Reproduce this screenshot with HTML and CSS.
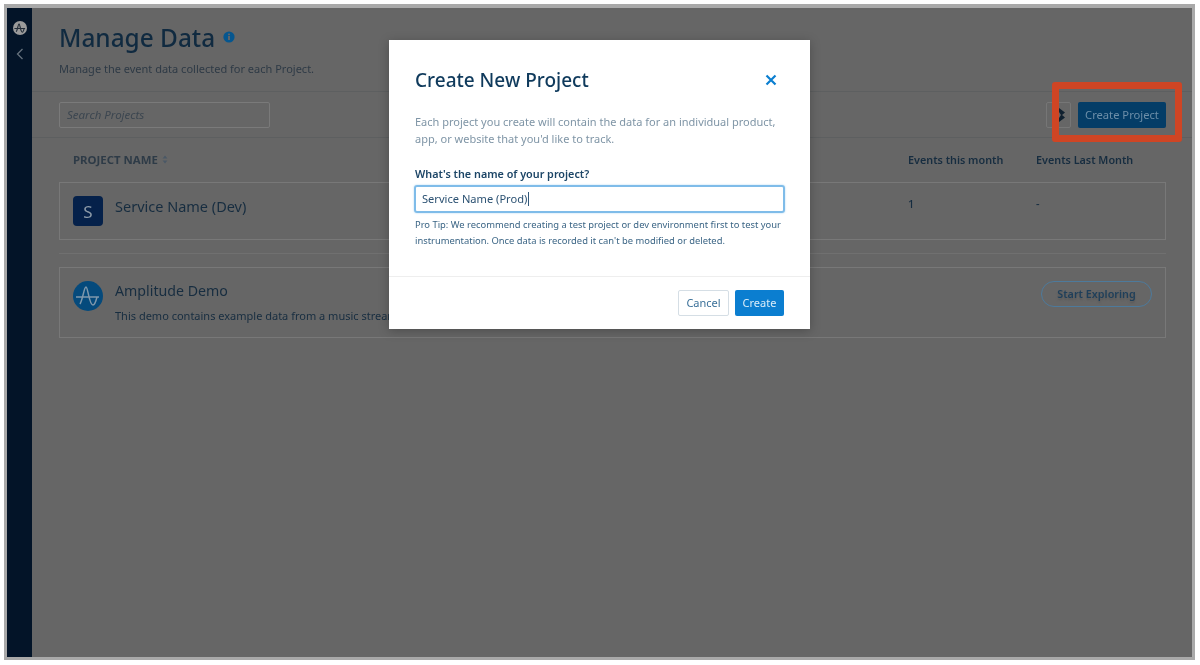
FILE: index.html
```html
<!DOCTYPE html>
<html lang="en">
<head>
<meta charset="utf-8">
<title>Manage Data</title>
<link rel="stylesheet" href="styles.css">
</head>
<body>
<div class="window">
  <aside class="sidebar">
    <svg class="side-logo" viewBox="0 0 30 30" width="14" height="14"><circle cx="15" cy="15" r="15" fill="#9a9a9a"/><path d="M3 16H26M7 23C10 18 11 6 13 6C15 6 16 24 20 24C22 24 23 20 24 16" fill="none" stroke="#222c38" stroke-width="2.400"/></svg>
    <svg class="side-back" viewBox="0 0 8 12" width="8" height="12"><path d="M6.500 1L1.500 6L6.500 11" fill="none" stroke="#66727d" stroke-width="1.300"/></svg>
  </aside>
  <main class="main">
    <header class="head">
      <h1 class="title">Manage Data <svg class="info" viewBox="0 0 12 12" width="12" height="12"><circle cx="6" cy="6" r="5.600" fill="#05568f"/><rect x="5.100" y="5" width="1.800" height="4" fill="#666"/><rect x="5.100" y="2.600" width="1.800" height="1.600" fill="#666"/></svg></h1>
      <p class="subtitle">Manage the event data collected for each Project.</p>
    </header>
    <div class="toolbar">
      <div class="search">Search Projects</div>
      <div class="tools">
        <div class="tool-icon"><svg viewBox="0 0 10 16" width="10" height="16"><path d="M2 1L8 5.500L5 8L8 10.500L2 15V11L4 8L2 5Z" fill="#10202f"/></svg></div>
        <div class="create-project">Create Project</div>
      </div>
    </div>
    <div class="content">
      <div class="cols">
        <div class="col-name">PROJECT NAME <svg viewBox="0 0 6 9" width="6" height="9"><path d="M3 .5L5.400 3.600H.6ZM3 8.500L.6 5.400H5.400Z" fill="#4a5866"/></svg></div>
        <div class="col-this">Events this month</div>
        <div class="col-last">Events Last Month</div>
      </div>
      <div class="row">
        <div class="avatar">S</div>
        <div class="row-name">Service Name (Dev)</div>
        <div class="val-this">1</div>
        <div class="val-last">-</div>
      </div>
      <hr class="sep">
      <div class="demo">
        <svg class="demo-logo" viewBox="0 0 30 30" width="30" height="30"><circle cx="15" cy="15" r="15" fill="#054a7c"/><path d="M3 16H26M7 23C10 18 11 6 13 6C15 6 16 24 20 24C22 24 23 20 24 16" fill="none" stroke="#7f98ac" stroke-width="1.500"/></svg>
        <div class="demo-body">
          <div class="demo-name">Amplitude Demo</div>
          <div class="demo-desc">This demo contains example data from a music streaming app to help you explore the many powerful analysis features in Amplitude.</div>
        </div>
        <div class="explore">Start Exploring</div>
      </div>
    </div>
  </main>
</div>
<div class="highlight"></div>
<section class="modal">
  <div class="modal-body">
    <div class="modal-head">
      <h2 class="modal-title">Create New Project</h2>
      <svg class="close" viewBox="0 0 12 12" width="12" height="12"><path d="M1.500 1.500L10.500 10.500M10.500 1.500L1.500 10.500" stroke="#0b7fd0" stroke-width="2.200" fill="none"/></svg>
    </div>
    <p class="intro">Each project you create will contain the data for an individual product, app, or website that you'd like to track.</p>
    <div class="label">What's the name of your project?</div>
    <div class="input"><span>Service Name (Prod)</span><i class="caret"></i></div>
    <p class="tip">Pro Tip: We recommend creating a test project or dev environment first to test your instrumentation. Once data is recorded it can't be modified or deleted.</p>
  </div>
  <div class="modal-foot">
    <div class="btn-cancel">Cancel</div>
    <div class="btn-create">Create</div>
  </div>
</section>
</body>
</html>
```
FILE: styles.css
```css
* { box-sizing: border-box; }
html, body { margin: 0; height: 100%; }
body {
  background: #fff;
  font-family: "Noto Sans", sans-serif;
  padding: 4px 5px 5px 4px;
  overflow: hidden;
}
.window {
  display: flex;
  width: 1191px;
  height: 656px;
  border: 3px solid #a9a9a9;
  border-top-width: 4px;
  background: #666;
  filter: blur(.3px);
}
.sidebar {
  width: 25px;
  flex: none;
  background: #031428;
  display: flex;
  flex-direction: column;
  align-items: center;
  padding-top: 13px;
  gap: 13px;
}
.main { flex: 1; min-width: 0; display: flex; flex-direction: column; }
.head { height: 84px; padding: 12px 0 0 27px; border-bottom: 1px solid #5d5f60; }
.title {
  margin: 0;
  font-size: 24.400px;
  line-height: 36px;
  font-weight: 500;
  color: #102a40;
  display: flex;
  align-items: center;
  gap: 8px;
}
.info { margin-top: -2px; }
.subtitle { margin: 5px 0 0; font-size: 11px; line-height: 16px; color: #2e3a46; }
.toolbar {
  height: 46px;
  padding: 10px 26px 0 27px;
  border-bottom: 1px solid #5d5f60;
  display: flex;
  justify-content: space-between;
}
.search {
  width: 211px;
  height: 26px;
  border: 1px solid #7a7a7a;
  border-radius: 2px;
  padding-left: 7px;
  font-size: 11.500px;
  line-height: 24px;
  font-style: italic;
  color: #3c4650;
}
.tools { display: flex; gap: 7px; }
.tool-icon {
  width: 25px;
  height: 26px;
  border: 1px solid #767676;
  border-radius: 2px;
  display: flex;
  align-items: center;
  justify-content: flex-end;
  padding-right: 3px;
}
.create-project {
  width: 88px;
  height: 26px;
  background: #043d67;
  border-radius: 2px;
  color: #6c8ea8;
  font-size: 11.200px;
  line-height: 26px;
  text-align: center;
}
.content { padding: 0 26px 0 27px; }
.cols {
  height: 44px;
  display: flex;
  align-items: center;
  padding: 0 0 2px 14px;
  font-size: 10.800px;
  font-weight: 600;
  color: #172d40;
}
.col-name { flex: 1; font-size: 11.400px; font-weight: 700; color: #2e3b47; display: flex; align-items: center; gap: 4px; }
.col-this { width: 128px; }
.col-last { width: 130px; }
.row {
  height: 58px;
  border: 1px solid #787878;
  display: flex;
  align-items: flex-start;
  padding: 13px 0 0 13px;
}
.avatar {
  width: 30px;
  height: 30px;
  border-radius: 4px;
  background: #05214a;
  color: #8c9aa8;
  font-size: 17px;
  line-height: 31px;
  text-align: center;
  flex: none;
}
.row-name { flex: 1; margin: 0 0 0 12px; font-size: 14.500px; line-height: 20px; color: #172d40; }
.val-this { width: 128px; font-size: 11px; line-height: 16px; color: #152c40; font-weight: 500; }
.val-last { width: 129px; font-size: 11px; line-height: 16px; color: #152c40; font-weight: 500; }
.sep { margin: 13px 0; border: 0; border-top: 1px solid #707070; }
.demo {
  height: 71px;
  border: 1px solid #787878;
  display: flex;
  align-items: flex-start;
  padding: 13px 13px 0;
  gap: 12px;
}
.demo-logo { flex: none; }
.demo-body { flex: 1; min-width: 0; }
.demo-name { font-size: 14.200px; line-height: 20px; color: #172d40; }
.demo-desc { font-size: 11px; line-height: 16px; color: #172d40; margin-top: 7px; white-space: nowrap; }
.explore {
  width: 111px;
  height: 26px;
  flex: none;
  border: 1px solid #4d7a9c;
  border-radius: 13px;
  text-align: center;
  font-size: 10.800px;
  line-height: 24px;
  font-weight: 600;
  color: #1f3f5a;
  text-shadow: 0 2px 2px #585858;
}
.highlight {
  position: absolute;
  left: 1052px;
  top: 82px;
  width: 130px;
  height: 60px;
  border: 7px solid #cf4524;
  border-radius: 3px;
}
.modal {
  position: absolute;
  left: 389px;
  top: 40px;
  width: 421px;
  height: 289px;
  background: #fff;
  box-shadow: 0 2px 10px rgba(0, 0, 0, .25);
  display: flex;
  flex-direction: column;
  filter: blur(.3px);
}
.modal-body { height: 237px; padding: 28px 26px 0; border-bottom: 1px solid #eee; }
.modal-head { display: flex; justify-content: space-between; align-items: center; height: 26px; padding: 0 7px 2px 0; }
.modal-title { margin: 0; font-size: 19px; line-height: 26px; font-weight: 500; color: #0f3a5c; }
.intro { margin: 19px 0 0; font-size: 11px; line-height: 17px; color: #7f95a6; }
.label { margin-top: 19px; font-size: 10.800px; line-height: 16px; font-weight: 600; color: #1c4566; }
.input {
  margin: 3px 0 0 -1px;
  width: 371px;
  height: 28px;
  border: 2px solid #7fbce9;
  border-radius: 3px;
  box-shadow: 0 0 2px #a9d3f1;
  padding-left: 6px;
  font-size: 11.100px;
  line-height: 24px;
  color: #2b5172;
  display: flex;
  align-items: center;
}
.caret { width: 1px; height: 14px; background: #33597a; margin-left: 1px; }
.tip { margin: 4px 0 0; font-size: 9.400px; line-height: 16px; color: #3b6585; }
.modal-foot { flex: 1; display: flex; justify-content: flex-end; gap: 6px; padding: 13px 26px 0 0; }
.btn-cancel {
  width: 51px;
  height: 26px;
  border: 1px solid #d5dee5;
  border-radius: 2px;
  text-align: center;
  font-size: 11px;
  line-height: 24px;
  color: #3a7099;
}
.btn-create {
  width: 49px;
  height: 26px;
  background: #0b7ed0;
  border-radius: 2px;
  text-align: center;
  font-size: 11px;
  line-height: 26px;
  color: #d9ecf9;
}
```
